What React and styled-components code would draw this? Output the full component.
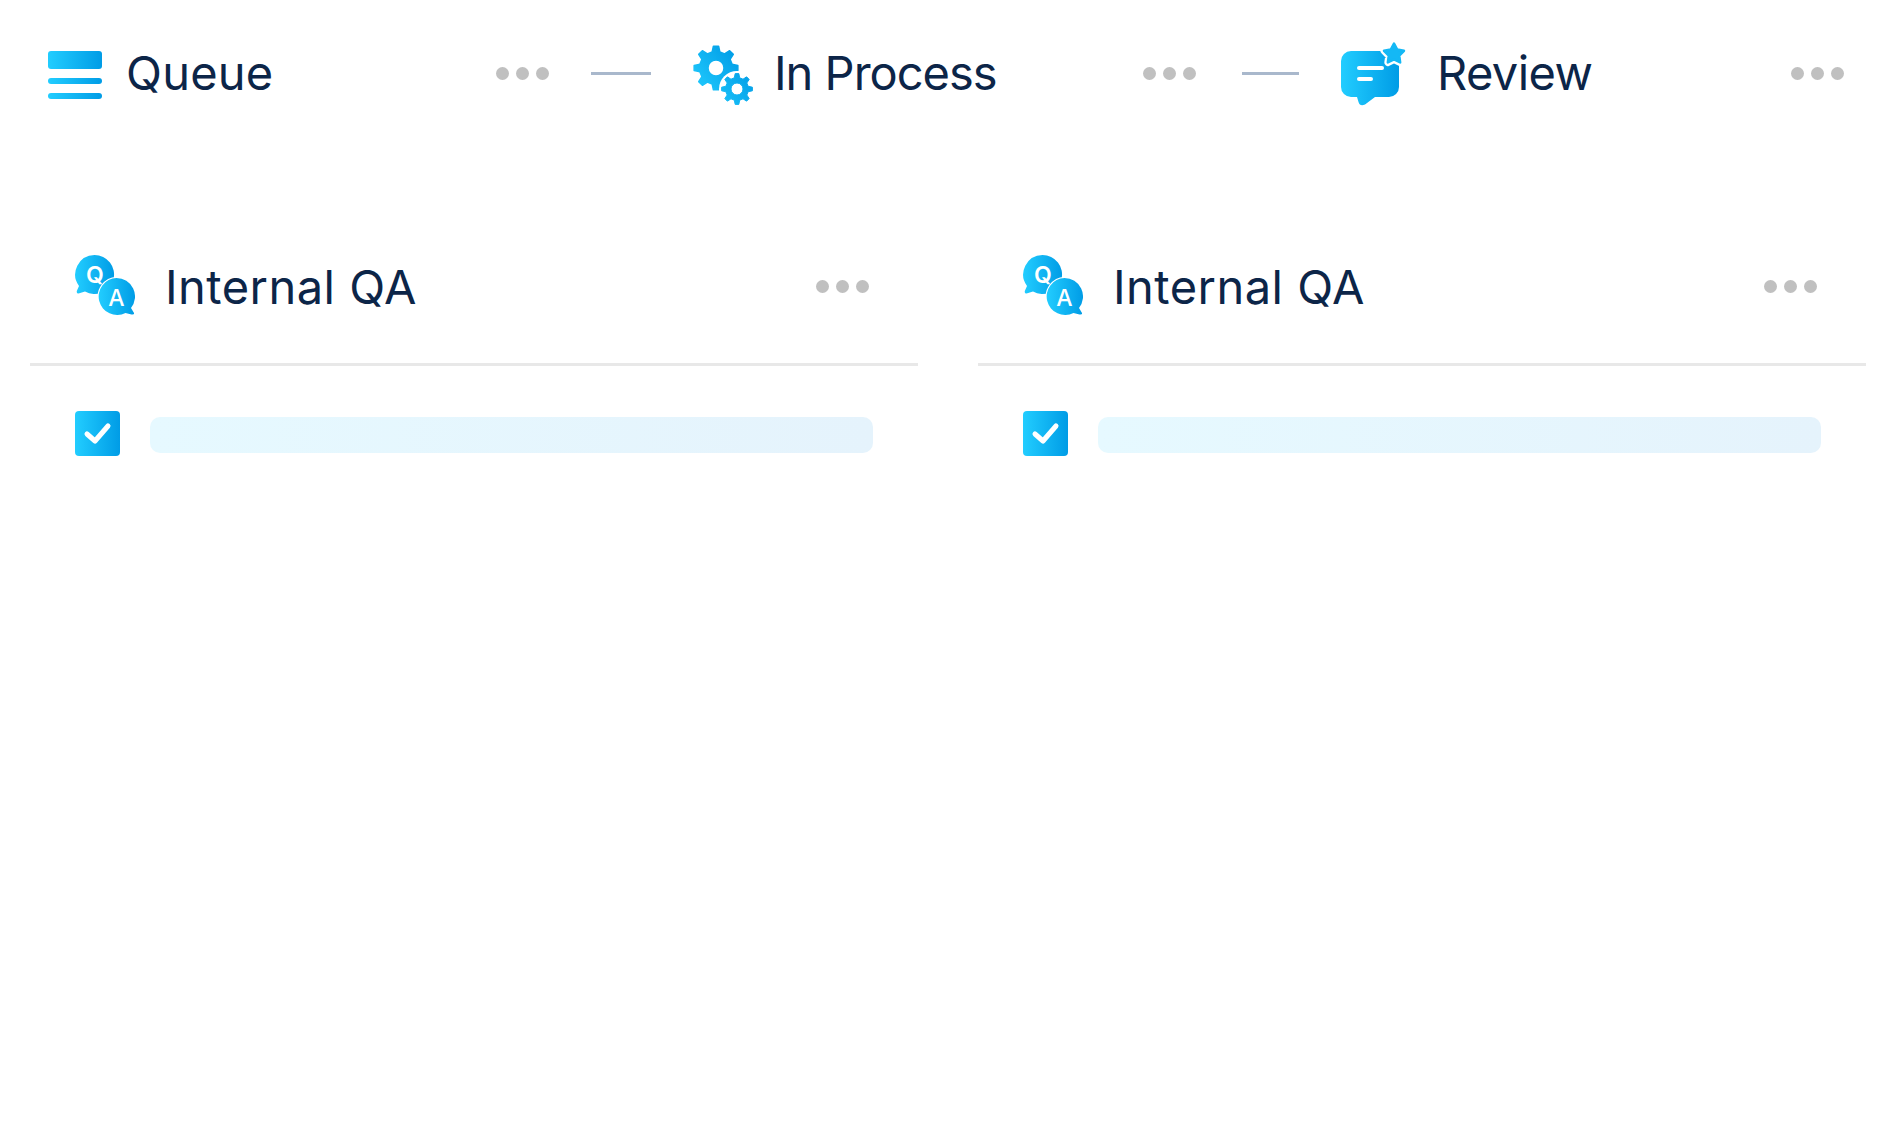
import React from 'react';
import styled, { createGlobalStyle } from 'styled-components';

const GlobalStyle = createGlobalStyle`
	html, body {
		margin: 0;
		background: #fff;
	}
	body {
		font-family: 'Inter', 'Liberation Sans', sans-serif;
		color: #0c2548;
	}
`;

const Page = styled.div`
	width: 1890px;
	height: 1131px;
	overflow: hidden;
`;

const Pipeline = styled.header`
	display: flex;
	align-items: center;
	height: 146px;
	padding-left: 48px;
`;

const Stage = styled.div`
	display: flex;
	align-items: center;
	flex: none;
	width: ${(p) => p.$width}px;
`;

const IconSlot = styled.span`
	display: flex;
	flex: none;
	margin-top: ${(p) => p.$drop}px;
`;

const StageTitle = styled.span`
	margin: 0 0 2px ${(p) => p.$gap}px;
	font-size: 47px;
	font-weight: 400;
	letter-spacing: ${(p) => p.$tracking}px;
	white-space: nowrap;
`;

const Connector = styled.span`
	flex: none;
	width: ${(p) => p.$width}px;
	height: 3px;
	margin: 0 42px 0 ${(p) => p.$lead}px;
	background: #a9b8cc;
`;

const Dots = styled.span`
	display: flex;
	gap: 7px;
	margin-left: auto;
`;

const Dot = styled.i`
	width: 13px;
	height: 13px;
	border-radius: 50%;
	background: #c0c0c0;
`;

const Board = styled.main`
	display: flex;
	gap: 60px;
	margin-top: 64px;
	padding-left: 30px;
`;

const Panel = styled.section`
	flex: none;
	width: 888px;
`;

const PanelHead = styled.div`
	display: flex;
	align-items: center;
	height: 153px;
	padding: 0 49px 0 45px;
	border-bottom: 3px solid #e8e8e8;
`;

const PanelTitle = styled.h2`
	margin: 0 0 1px 30px;
	font-size: 47px;
	font-weight: 400;
	letter-spacing: 0.47px;
	white-space: nowrap;
`;

const Task = styled.div`
	display: flex;
	align-items: center;
	gap: 30px;
	padding: 45px 45px 0;
`;

const Checkbox = styled.span`
	display: flex;
	flex: none;
	width: 45px;
	height: 45px;
	border-radius: 4px;
	background: linear-gradient(90deg, #22cdff, #009ce6);
`;

const Placeholder = styled.span`
	flex: 1;
	height: 36px;
	margin-top: 3px;
	border-radius: 10px;
	background: linear-gradient(90deg, #e6f9ff, #e5f3fc);
`;

const Fade = ({ id }) => (
	<defs>
		<linearGradient id={id} x1='0' y1='0' x2='1' y2='0'>
			<stop offset='0' stopColor='#22cdff' />
			<stop offset='1' stopColor='#009ce6' />
		</linearGradient>
	</defs>
);

const gearPath = (cx, cy, outer, root, hole) => {
	const teeth = 8;
	const step = (Math.PI * 2) / teeth;
	const pt = (r, a) => `${(cx + r * Math.sin(a)).toFixed(2)} ${(cy - r * Math.cos(a)).toFixed(2)}`;
	let d = '';
	for (let i = 0; i < teeth; i++) {
		const a = i * step;
		d += `${i ? 'L' : 'M'}${pt(root, a - step * 0.3)} L${pt(outer, a - step * 0.15)} L${pt(outer, a + step * 0.15)} L${pt(root, a + step * 0.3)} `;
	}
	d += `Z M${cx - hole} ${cy} a${hole} ${hole} 0 1 0 ${hole * 2} 0 a${hole} ${hole} 0 1 0 ${-hole * 2} 0 Z`;
	return d;
};

const starPath = (cx, cy, outer, inner) => {
	let d = '';
	for (let i = 0; i < 10; i++) {
		const r = i % 2 ? inner : outer;
		const a = (i * Math.PI) / 5;
		d += `${i ? 'L' : 'M'}${(cx + r * Math.sin(a)).toFixed(2)} ${(cy - r * Math.cos(a)).toFixed(2)} `;
	}
	return d + 'Z';
};

const QueueIcon = () => (
	<svg width='54' height='48' viewBox='0 0 54 48'>
		<Fade id='queue-fade' />
		<rect width='54' height='18' rx='3' fill='url(#queue-fade)' />
		<rect y='27' width='54' height='6' rx='3' fill='url(#queue-fade)' />
		<rect y='42' width='54' height='6' rx='3' fill='url(#queue-fade)' />
	</svg>
);

const GearsIcon = () => (
	<svg width='62' height='62' viewBox='0 0 62 62'>
		<defs>
			<linearGradient id='gear-fade' gradientUnits='userSpaceOnUse' x1='0' y1='46' x2='46' y2='10'>
				<stop offset='0' stopColor='#22cdff' />
				<stop offset='1' stopColor='#009ce6' />
			</linearGradient>
		</defs>
		<path
			d={gearPath(23, 23, 22, 16.5, 8)}
			fill='url(#gear-fade)'
			fillRule='evenodd'
			stroke='url(#gear-fade)'
			strokeWidth='1.5'
			strokeLinejoin='round'
		/>
		<circle cx='44' cy='44' r='18' fill='#fff' />
		<path
			d={gearPath(44, 44, 15.5, 11.5, 6)}
			fill='url(#gear-fade)'
			fillRule='evenodd'
			stroke='url(#gear-fade)'
			strokeWidth='1'
			strokeLinejoin='round'
		/>
	</svg>
);

const ReviewIcon = () => (
	<svg width='66' height='66' viewBox='0 0 66 66'>
		<Fade id='review-fade' />
		<path
			d='M10 10 H48 A10 10 0 0 1 58 20 V46 A10 10 0 0 1 48 56 H34 L24 63.5 Q19 66 17.5 61 L16 56 H10 A10 10 0 0 1 0 46 V20 A10 10 0 0 1 10 10 Z'
			fill='url(#review-fade)'
		/>
		<path d={starPath(53, 13, 10.5, 5.5)} fill='#fff' stroke='#fff' strokeWidth='7' strokeLinejoin='round' />
		<path d={starPath(53, 13, 10.5, 5.5)} fill='#14b8f5' stroke='#14b8f5' strokeWidth='2.5' strokeLinejoin='round' />
		<rect x='16' y='25' width='27' height='4' rx='2' fill='#fff' />
		<rect x='16' y='36' width='16' height='4' rx='2' fill='#fff' />
	</svg>
);

const QaIcon = ({ id }) => (
	<svg width='60' height='60' viewBox='0 0 60 60' fontFamily='Inter, sans-serif'>
		<Fade id={id} />
		<path d='M19.5 0 A19.5 19.5 0 1 1 10 36.5 L3.5 38.5 Q1 38.5 2 35.5 L4 31 A19.5 19.5 0 0 1 19.5 0 Z' fill={`url(#${id})`} />
		<text x='20' y='28' fontSize='23' fontWeight='600' textAnchor='middle' fill='#fff'>Q</text>
		<path
			d='M41.5 23 A18.5 18.5 0 0 1 56 53 L59 58 Q59.5 60 56.5 59.5 L50.5 58 A18.5 18.5 0 1 1 41.5 23 Z'
			fill={`url(#${id})`}
			stroke='#fff'
			strokeWidth='2'
			paintOrder='stroke'
		/>
		<text x='41.5' y='51' fontSize='23' fontWeight='500' textAnchor='middle' fill='#fff'>A</text>
	</svg>
);

const CheckMark = () => (
	<svg width='45' height='45' viewBox='0 0 45 45'>
		<path d='M12 23 L20 30 L33 15' fill='none' stroke='#fff' strokeWidth='5' strokeLinecap='round' strokeLinejoin='round' />
	</svg>
);

const MoreDots = () => (
	<Dots>
		<Dot />
		<Dot />
		<Dot />
	</Dots>
);

const ReviewPanel = ({ id }) => (
	<Panel>
		<PanelHead>
			<IconSlot $drop={-3}>
				<QaIcon id={id} />
			</IconSlot>
			<PanelTitle>Internal QA</PanelTitle>
			<MoreDots />
		</PanelHead>
		<Task>
			<Checkbox>
				<CheckMark />
			</Checkbox>
			<Placeholder />
		</Task>
	</Panel>
);

const App = () => (
	<Page>
		<GlobalStyle />
		<Pipeline>
			<Stage $width={501}>
				<IconSlot $drop={4}>
					<QueueIcon />
				</IconSlot>
				<StageTitle $gap={24} $tracking={0.2}>Queue</StageTitle>
				<MoreDots />
			</Stage>
			<Connector $lead={42} $width={60} />
			<Stage $width={503}>
				<IconSlot $drop={6}>
					<GearsIcon />
				</IconSlot>
				<StageTitle $gap={19} $tracking={-1}>In Process</StageTitle>
				<MoreDots />
			</Stage>
			<Connector $lead={46} $width={57} />
			<Stage $width={503}>
				<IconSlot $drop={2}>
					<ReviewIcon />
				</IconSlot>
				<StageTitle $gap={30} $tracking={-0.6}>Review</StageTitle>
				<MoreDots />
			</Stage>
		</Pipeline>
		<Board>
			<ReviewPanel id='qa-first' />
			<ReviewPanel id='qa-second' />
		</Board>
	</Page>
);

export default App;
